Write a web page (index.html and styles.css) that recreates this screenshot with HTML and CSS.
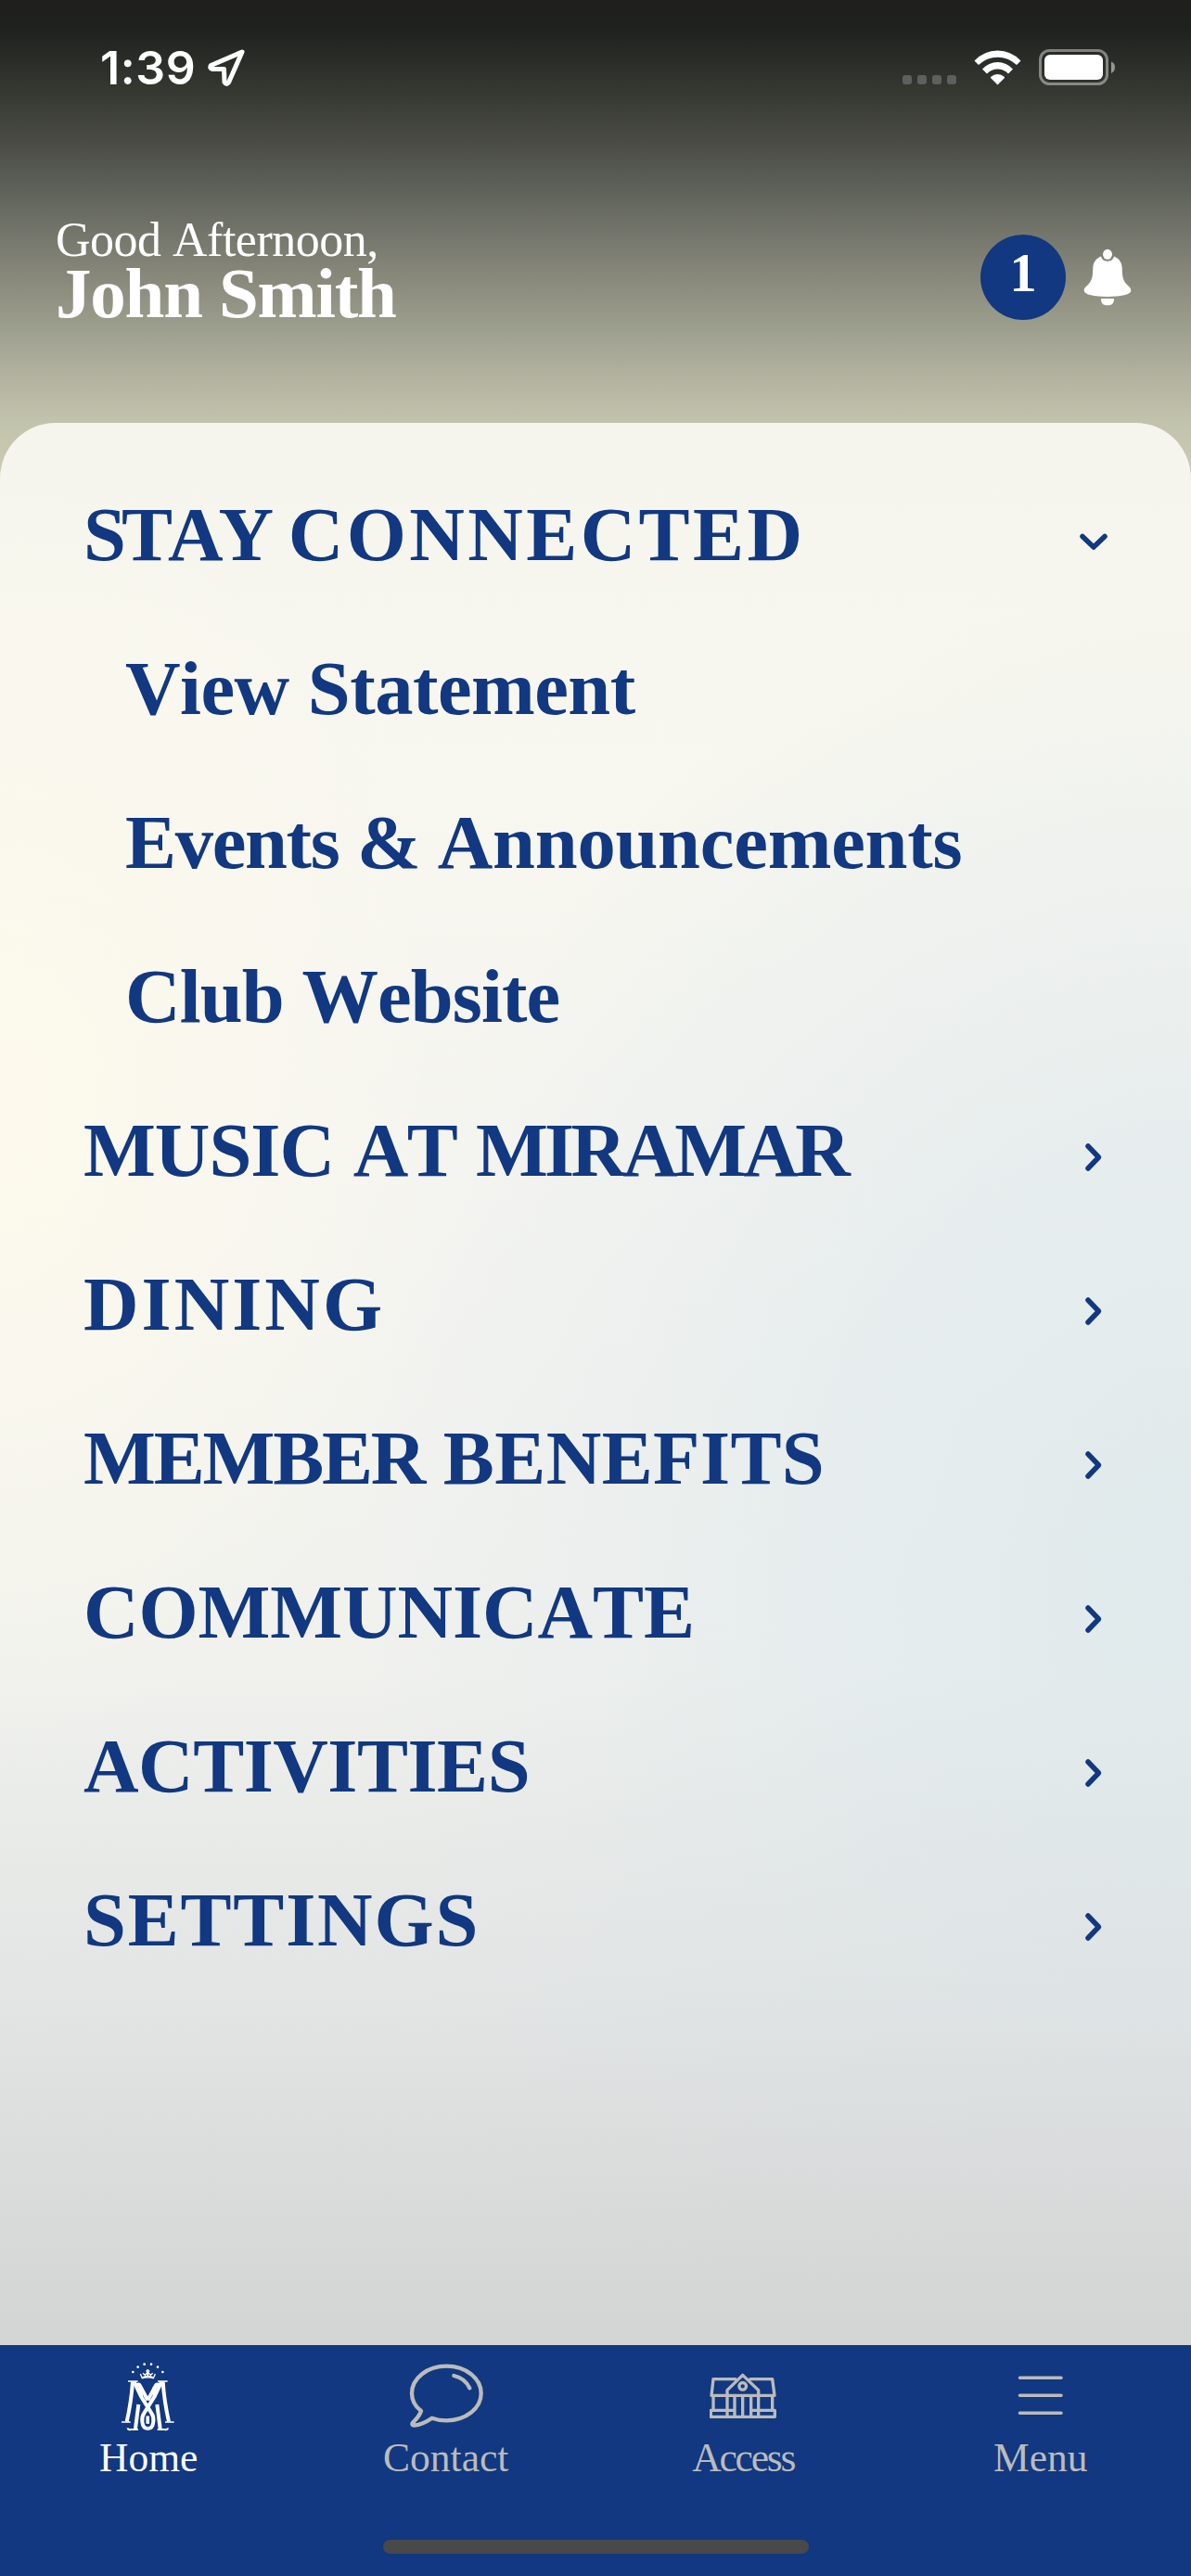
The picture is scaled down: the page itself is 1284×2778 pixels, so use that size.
FILE: index.html
```html
<!DOCTYPE html>
<html lang="en">
<head>
<meta charset="utf-8">
<title>Club Menu</title>
<link rel="stylesheet" href="styles.css">
</head>
<body>
<div class="screen">
  <div class="status">
    <div class="status-left">
      <span class="time">1:39</span>
      <svg class="locate" width="42" height="42" viewBox="0 0 42 42"><path d="M38 4 L4.500 18.500 Q2.500 21.500 6 22.500 L18.500 22.500 L19 36.500 Q21 40 23.500 37 Z" fill="none" stroke="#fff" stroke-width="5" stroke-linejoin="round"/></svg>
    </div>
    <div class="status-right">
      <div class="dots"><i></i><i></i><i></i><i></i></div>
      <svg class="wifi" width="51" height="38" viewBox="0 0 51 38" fill="#fff"><path d="M.5 11.500Q11 .5 25.500 .5T50.500 11.500L46 16Q37 7.800 25.500 7.800T5 16Z"/><path d="M9 20.500Q16 13 25.500 13T42 20.500L37 25.500Q32 20.600 25.500 20.600T14 25.500Z"/><path d="M18 29Q21.500 26 25.500 26T33 29V30L25.500 37.500L18 30Z"/></svg>
      <svg class="battery" width="83" height="40" viewBox="0 0 83 40"><rect x="1.500" y="1.500" width="72" height="36" rx="10" fill="none" stroke="#fff" stroke-opacity=".42" stroke-width="3"/><rect x="6" y="6" width="63" height="27" rx="6" fill="#fff"/><path d="M78 13.500Q82 15 82 19.500T78 26Z" fill="#fff" fill-opacity=".5"/></svg>
    </div>
  </div>

  <header class="header">
    <div class="greeting">
      <div class="hello">Good Afternoon,</div>
      <div class="name">John Smith</div>
    </div>
    <div class="alerts">
      <span class="count">1</span>
      <svg width="52" height="62" viewBox="0 0 52 62" fill="#fff"><ellipse cx="26" cy="6.300" rx="5" ry="5.500"/><path d="M19 8.500Q20.500 13.700 26 13.700T33 8.500C39 11 41.500 15.500 41.700 21C42 29 42 34 47.500 39.500C50 41.500 51.300 43 51.300 45.300C51.300 50 40 52 26 52S.7 50 .7 45.300C.7 43 2 41.500 4.500 39.500C10 34 10 29 10.300 21C10.500 15.500 13 11 19 8.500Z"/><path d="M19 54H33V56Q32 61.200 27.500 61.200H24.500Q20 61.200 19 56Z"/></svg>
    </div>
  </header>

  <main class="panel">
    <div class="row"><span class="label"><span class="stay">STAY</span> <span class="connected">CONNECTED</span></span><svg class="chev" width="32" height="32" viewBox="0 0 32 32"><path d="M4 10.500L16 22L28 10.500"/></svg></div>
    <div class="row sub"><span class="view">View Statement</span></div>
    <div class="row sub"><span class="events">Events &amp; <span class="announce">Announcements</span></span></div>
    <div class="row sub"><span class="website">Club Website</span></div>
    <div class="row"><span class="label"><span class="music">MUSIC</span> <span class="at">AT</span> <span class="miramar">MIRAMAR</span></span><svg class="chev" width="32" height="32" viewBox="0 0 32 32"><path d="M10 4L21.500 16L10 28"/></svg></div>
    <div class="row"><span class="dining">DINING</span><svg class="chev" width="32" height="32" viewBox="0 0 32 32"><path d="M10 4L21.500 16L10 28"/></svg></div>
    <div class="row"><span class="label"><span class="member">MEMBER</span> <span class="benefits">BENEFITS</span></span><svg class="chev" width="32" height="32" viewBox="0 0 32 32"><path d="M10 4L21.500 16L10 28"/></svg></div>
    <div class="row"><span class="communicate">COMMUNICATE</span><svg class="chev" width="32" height="32" viewBox="0 0 32 32"><path d="M10 4L21.500 16L10 28"/></svg></div>
    <div class="row"><span class="activities">ACTIVITIES</span><svg class="chev" width="32" height="32" viewBox="0 0 32 32"><path d="M10 4L21.500 16L10 28"/></svg></div>
    <div class="row"><span class="settings">SETTINGS</span><svg class="chev" width="32" height="32" viewBox="0 0 32 32"><path d="M10 4L21.500 16L10 28"/></svg></div>
  </main>

  <nav class="tabs">
    <div class="tab-row">
      <div class="tab active">
        <svg width="60" height="78" viewBox="90 45 180 234">
          <defs><g id="half" fill="none" stroke="#fff">
            <path d="M114 111H146M93 243H122" stroke-width="5"/>
            <path d="M129 112Q125 175 110 242" stroke-width="12"/>
            <path d="M134 113L156 160L190 214Q198 226 196 242Q194 264 178 264" stroke-width="12"/>
            <path d="M142 124Q149 117 154 128L178 172" stroke-width="12"/>
            <path d="M156 128V160M148 186L138 264" stroke-width="12"/>
            <path d="M113 262Q114 269 122 267H147" stroke-width="6"/>
            <path d="M178 224V248" stroke-width="10"/>
            <path d="M159 102Q168 98 178 99M154 87L159 99Q168 94 178 94L176 83L169 91L162 85" stroke-width="4"/>
          </g></defs>
          <use href="#half"/><use href="#half" transform="translate(356 0) scale(-1 1)"/>
          <path d="M178 72V88M172 78H184" stroke="#fff" stroke-width="5"/>
          <g fill="#fff"><circle cx="130" cy="81" r="4"/><circle cx="146" cy="65" r="4"/><circle cx="167" cy="56" r="4"/><circle cx="189" cy="56" r="4"/><circle cx="210" cy="65" r="4"/><circle cx="226" cy="81" r="4"/></g>
        </svg>
        <span class="t-home">Home</span>
      </div>
      <div class="tab">
        <svg width="80" height="78" viewBox="1144 78 240 234" fill="none" stroke="#bbb" stroke-width="13" stroke-linecap="round" stroke-linejoin="round"><path d="M1183 240C1163 225 1153 205 1153 183C1153 134 1203 95 1265 95S1377 134 1377 183S1327 271 1265 271C1248 271 1232 268 1218 263C1198 277 1178 285 1160 287C1152 286 1153 280 1158 276C1170 264 1179 252 1183 240Z"/><path d="M1289 126Q1325 134 1340 166"/></svg>
        <span class="t-contact">Contact</span>
      </div>
      <div class="tab">
        <svg width="72" height="78" viewBox="80 48 216 234" fill="none" stroke="#bbb" stroke-width="10" stroke-linejoin="round" stroke-linecap="round"><path d="M164 107H92L86 160H290L283 107H211M137 229V143L187 94L238 143V229M92 160V208M283 160V208M161 160V229M187 160V229M214 160V229M161 208H84V229H291V208H214"/><circle cx="187" cy="130" r="11.500"/></svg>
        <span class="t-access">Access</span>
      </div>
      <div class="tab">
        <svg width="50" height="78" viewBox="0 0 50 78" fill="none" stroke="#bbb" stroke-width="3.600" stroke-linecap="round"><path d="M2.500 18.300H47M2.500 37.300H47M2.500 56.300H47"/></svg>
        <span class="t-menu">Menu</span>
      </div>
    </div>
    <div class="indicator"></div>
  </nav>
</div>
</body>
</html>
```
FILE: styles.css
```css
body { margin: 0; }
.screen {
  width: 1284px;
  height: 2778px;
  display: flex;
  flex-direction: column;
  overflow: hidden;
  background: linear-gradient(#1f201e 0, #1f211e 30px, #363832 100px, #484a43 150px, #5d6058 200px, #73756b 250px, #89897b 300px, #9b9d8c 350px, #b0b09e 400px, #c2c3ac 455px, #cdccb4 520px);
  font-family: "Liberation Serif", serif;
  color: #fff;
}
.status {
  height: 146px;
  display: flex;
  justify-content: space-between;
  padding: 0 81px 0 108px;
  box-sizing: border-box;
  align-items: center;
}
.status-left, .status-right { display: flex; align-items: center; }
.time { font: 600 50px/60px Inter, sans-serif; letter-spacing: .6px; width: 115px; }
.dots { display: flex; gap: 6px; margin: 26px 19px 0 0; }
.dots i { width: 10px; height: 10px; border-radius: 3px; background: #5f605e; }
.wifi { margin-right: 19px; }
.header {
  height: 310px;
  box-sizing: border-box;
  padding: 79px 64px 0 60px;
  display: flex;
  justify-content: space-between;
}
.hello { font-size: 52px; line-height: 60px; margin-top: 4px; letter-spacing: -.5px; font-kerning: none; }
.name { font-size: 77px; line-height: 66px; font-weight: 700; letter-spacing: -1.200px; margin-top: -6px; }
.alerts { display: flex; gap: 19px; align-items: center; height: 148px; }
.count {
  width: 92px;
  height: 92px;
  border-radius: 50%;
  background: #113880;
  font: 700 59px/83px "Liberation Serif", serif;
  text-align: center;
}
.panel {
  flex: 1;
  border-radius: 60px 60px 0 0;
  padding: 37px 90px 0;
  color: #113880;
  background:
    linear-gradient(rgba(212,213,214,0) 1350px, rgba(216,220,222,.55) 1700px, #d4d5d5 2040px),
    radial-gradient(ellipse 900px 1100px at 100% 1250px, #e0eaec 0, rgba(227,235,237,.75) 45%, rgba(230,236,237,0) 100%),
    radial-gradient(ellipse 480px 700px at 0 740px, #fdfaec 0, rgba(253,250,238,0) 100%),
    linear-gradient(#f5f5ed, #f8f7ef 300px, #f4f4f0 900px, #eff0ec 1500px);
}
.row {
  height: 166px;
  display: flex;
  align-items: center;
  justify-content: space-between;
  font-size: 82.500px;
  font-weight: 700;
  line-height: 166px;
  white-space: nowrap;
  font-kerning: none;
}
.sub { padding-left: 45px; }
.chev { margin: 16px -1px 0 0; fill: none; stroke: #113880; stroke-width: 5.500; stroke-linecap: round; stroke-linejoin: round; }
.stay { letter-spacing: -5px; }
.connected { letter-spacing: 3.400px; }
.view { letter-spacing: -.5px; }
.events { letter-spacing: -1.300px; }
.announce { letter-spacing: -.2px; }
.website { letter-spacing: -.9px; }
.music { letter-spacing: -1px; }
.at { letter-spacing: -1.500px; }
.miramar { letter-spacing: -3.700px; }
.dining { letter-spacing: 3px; }
.member { letter-spacing: -2.200px; }
.benefits { letter-spacing: .4px; }
.communicate { letter-spacing: -.1px; }
.activities { letter-spacing: -.5px; }
.settings { letter-spacing: 1.800px; }
.tabs {
  height: 249px;
  background: #113880;
  display: flex;
  flex-direction: column;
  align-items: center;
  justify-content: space-between;
}
.tab-row {
  width: 1284px;
  box-sizing: border-box;
  display: grid;
  grid-template-columns: repeat(4, 1fr);
  padding: 17px 2px 0 0;
}
.tab {
  display: flex;
  flex-direction: column;
  align-items: center;
  font-size: 43.500px;
  line-height: 50px;
  color: #bbb;
  gap: 1px;
}
.tab.active { color: #fff; }
.t-access { letter-spacing: -2.200px; }
.indicator { width: 459px; height: 15px; border-radius: 8px; background: #494949; margin-bottom: 24px; }
```
